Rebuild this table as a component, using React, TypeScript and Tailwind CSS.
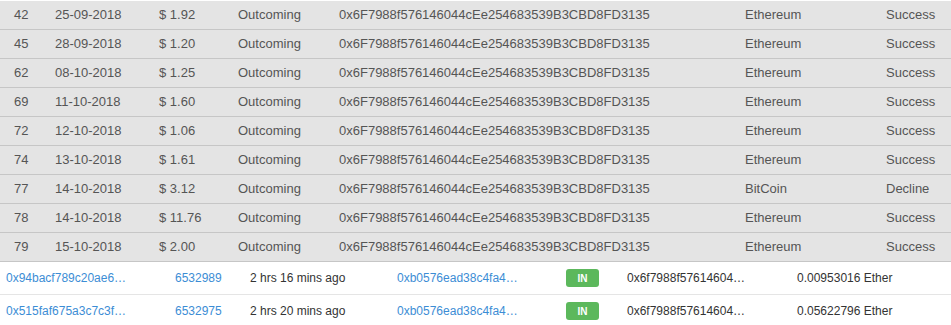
import React from 'react';

const HASH = '0x6F7988f576146044cEe254683539B3CBD8FD3135';

const payments = [
  { id: 42, date: '25-09-2018', amount: '$ 1.92', coin: 'Ethereum', status: 'Success' },
  { id: 45, date: '28-09-2018', amount: '$ 1.20', coin: 'Ethereum', status: 'Success' },
  { id: 62, date: '08-10-2018', amount: '$ 1.25', coin: 'Ethereum', status: 'Success' },
  { id: 69, date: '11-10-2018', amount: '$ 1.60', coin: 'Ethereum', status: 'Success' },
  { id: 72, date: '12-10-2018', amount: '$ 1.06', coin: 'Ethereum', status: 'Success' },
  { id: 74, date: '13-10-2018', amount: '$ 1.61', coin: 'Ethereum', status: 'Success' },
  { id: 77, date: '14-10-2018', amount: '$ 3.12', coin: 'BitCoin', status: 'Decline' },
  { id: 78, date: '14-10-2018', amount: '$ 11.76', coin: 'Ethereum', status: 'Success' },
  { id: 79, date: '15-10-2018', amount: '$ 2.00', coin: 'Ethereum', status: 'Success' },
];

const txs = [
  { hash: '0x94bacf789c20ae6…', block: '6532989', age: '2 hrs 16 mins ago', value: '0.00953016 Ether' },
  { hash: '0x515faf675a3c7c3f…', block: '6532975', age: '2 hrs 20 mins ago', value: '0.05622796 Ether' },
];

export default function App() {
  return (
    <div className="w-[951px] h-[325px] overflow-hidden bg-white pt-px font-['Liberation_Sans',Arial,sans-serif]">
      {/* payment history */}
      <div className="text-[13px] text-[#555]">
        {payments.map((p) => (
          <div key={p.id} className="flex items-center h-[29px] bg-[#e4e4e4] border-b border-[#c6c6c6]">
            <div className="w-[55px] pl-[14px]">{p.id}</div>
            <div className="w-[104px]">{p.date}</div>
            <div className="w-[79px]">{p.amount}</div>
            <div className="w-[101px]">Outcoming</div>
            <div className="w-[406px]">{HASH}</div>
            <div className="w-[141px]">{p.coin}</div>
            <div>{p.status}</div>
          </div>
        ))}
      </div>

      {/* latest transactions */}
      <div className="text-[12px] text-[#333]">
        {txs.map((t) => (
          <div key={t.hash} className="flex items-center h-[33px] border-b border-[#e5e5e5]">
            <div className="w-[175px] pl-[6px] text-[#3c8dd5]">{t.hash}</div>
            <div className="w-[75px] text-[#3c8dd5]">{t.block}</div>
            <div className="w-[147px]">{t.age}</div>
            <div className="w-[169px] text-[#3c8dd5]">0xb0576ead38c4fa4…</div>
            <div className="w-[61px]">
              <span className="flex items-center justify-center w-[33px] h-[18px] rounded-[3px] bg-[#5cb85c] text-white text-[10px] font-bold">
                IN
              </span>
            </div>
            <div className="w-[170px]">0x6f7988f57614604…</div>
            <div>{t.value}</div>
          </div>
        ))}
      </div>
    </div>
  );
}
